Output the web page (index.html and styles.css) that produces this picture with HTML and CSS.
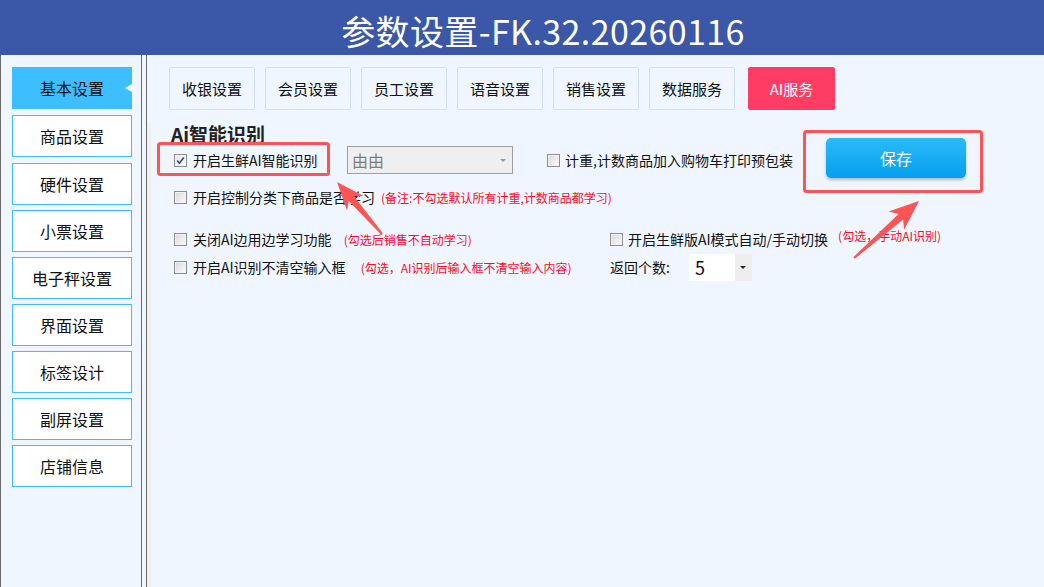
FILE: index.html
```html
<!DOCTYPE html>
<html lang="zh-CN">
<head>
    <meta charset="UTF-8">
    <title>参数设置</title>
    <link rel="stylesheet" href="styles.css">
</head>
<body>
    <div class="header">
        <h1 class="title">参数设置-FK.32.20260116</h1>
    </div>

    <div class="main">
        <ul class="side">
            <li class="side-item active">基本设置</li>
            <li class="side-item">商品设置</li>
            <li class="side-item">硬件设置</li>
            <li class="side-item">小票设置</li>
            <li class="side-item">电子秤设置</li>
            <li class="side-item">界面设置</li>
            <li class="side-item">标签设计</li>
            <li class="side-item">副屏设置</li>
            <li class="side-item">店铺信息</li>
        </ul>

        <div class="content">
            <div class="tabs">
                <div class="tab">收银设置</div>
                <div class="tab">会员设置</div>
                <div class="tab">员工设置</div>
                <div class="tab">语音设置</div>
                <div class="tab">销售设置</div>
                <div class="tab">数据服务</div>
                <div class="tab tab-ai">AI服务</div>
            </div>

            <div class="panel">
                <div class="top">
                    <div class="top-left">
                        <h2 class="section-title">Ai智能识别</h2>
                        <div class="row row-1">
                            <div class="col-a">
                                <span class="box checked">
                                    <svg width="11" height="11" viewBox="0 0 11 11"><path d="M2.2 5.6 L4.4 8.2 L8.8 2.6" fill="none" stroke="#3b4479" stroke-width="1.6"/></svg>
                                </span>
                                <span class="label">开启生鲜AI智能识别</span>
                            </div>
                            <div class="select select-grey">
                                <span>由由</span>
                                <span class="caret"></span>
                            </div>
                            <div class="check-b">
                                <span class="box"></span>
                                <span class="label">计重,计数商品加入购物车打印预包装</span>
                            </div>
                        </div>
                    </div>
                    <button class="save">保存</button>
                </div>

                <div class="row row-2">
                    <span class="box"></span>
                    <span class="label">开启控制分类下商品是否学习</span>
                    <span class="note note-2">(备注:不勾选默认所有计重,计数商品都学习)</span>
                </div>

                <div class="row row-3">
                    <div class="col-left">
                        <span class="box"></span>
                        <span class="label">关闭AI边用边学习功能</span>
                        <span class="note note-3">(勾选后销售不自动学习)</span>
                    </div>
                    <div class="col-right">
                        <span class="box"></span>
                        <span class="label">开启生鲜版AI模式自动/手动切换</span>
                        <span class="note note-up">(勾选，手动AI识别)</span>
                    </div>
                </div>

                <div class="row row-4">
                    <div class="col-left">
                        <span class="box"></span>
                        <span class="label">开启AI识别不清空输入框</span>
                        <span class="note note-4">(勾选，AI识别后输入框不清空输入内容)</span>
                    </div>
                    <div class="col-right">
                        <span class="label">返回个数:</span>
                        <div class="select select-white">
                            <span>5</span>
                            <span class="caret-box"><span class="caret dark"></span></span>
                        </div>
                    </div>
                </div>
            </div>
        </div>
    </div>

    <!-- annotation marks drawn over the screenshot -->
    <svg class="marks" width="1044" height="587" viewBox="0 0 1044 587">
        <rect x="158.5" y="143.5" width="170" height="31" rx="2" fill="none" stroke="#ff5454" stroke-width="3"/>
        <rect x="804.5" y="131.5" width="177" height="60" rx="2" fill="none" stroke="#ff5454" stroke-width="3"/>
        <polygon fill="#ff5454" points="337,182 363.6,196 354,196.3 382.8,233.3 381.2,234.7 348.8,200.9 347,210.4"/>
        <polygon fill="#ff5454" points="919,201 904.1,229.7 903.1,219.4 854.7,258.8 853.3,257.2 898.5,214 888.5,211.5"/>
    </svg>
</body>
</html>
```

FILE: styles.css
```css
* {
    box-sizing: border-box;
}

html, body {
    margin: 0;
    padding: 0;
}

body {
    width: 1044px;
    height: 587px;
    overflow: hidden;
    position: relative;
    background: #eff6ff;
    font-family: "Noto Sans CJK SC", "Noto Sans", sans-serif;
    color: #111;
    display: flex;
    flex-direction: column;
}

.header {
    height: 55px;
    background: #3a57a8;
    text-align: center;
    padding-left: 42px;
}

.title {
    margin: 0;
    color: #fff;
    font-size: 34px;
    font-weight: normal;
    letter-spacing: 0.4px;
    line-height: 62px;
    height: 55px;
}

.main {
    flex: 1;
    display: flex;
}

/* left menu */
.side {
    list-style: none;
    margin: 0;
    padding: 12px 0 0 11px;
    width: 142px;
    border-left: 1px solid #6a6a6a;
    border-right: 1px solid #6a6a6a;
}

.side-item {
    position: relative;
    width: 120px;
    height: 42px;
    margin-bottom: 5px;
    background: #fff;
    border: 1px solid #3dbfff;
    text-align: center;
    font-size: 16px;
    line-height: 40px;
    color: #111;
}

.side-item:nth-child(-n+2) {
    margin-bottom: 6px;
}

.side-item.active {
    background: #3dbfff;
}

.side-item.active::after {
    content: "";
    position: absolute;
    right: -1px;
    top: 50%;
    margin-top: -4px;
    border-top: 4px solid transparent;
    border-bottom: 4px solid transparent;
    border-right: 7px solid #fff;
}

/* right content */
.content {
    flex: 1;
    margin-left: 4px;
    border-left: 1px solid #6a6a6a;
    padding-top: 12px;
    display: flex;
    flex-direction: column;
}

.tabs {
    display: flex;
    gap: 10px;
    padding-left: 22px;
}

.tab {
    width: 86px;
    height: 43px;
    border: 1px solid #cfe0f8;
    border-radius: 2px;
    background: #eff6ff;
    text-align: center;
    font-size: 15px;
    line-height: 41px;
    color: #111;
}

.tab-ai {
    width: 87px;
    margin-left: 3px;
    background: #ff3d64;
    border-color: #ff3d64;
    color: #fff;
}

.panel {
    flex: 1;
    margin-top: 12px;
    border-left: 4px solid #f1f1f3;
    padding-left: 20px;
}

.top {
    display: flex;
    align-items: flex-start;
}

.top-left {
    width: 655px;
}

.section-title {
    margin: 0;
    height: 24px;
    font-size: 19px;
    line-height: 24px;
    font-weight: bold;
    color: #222;
}

.save {
    margin-top: 16px;
    width: 140px;
    height: 40px;
    border: none;
    border-radius: 5px;
    background: linear-gradient(180deg, #2bbaf8, #04a0ee);
    box-shadow: 0 2px 3px rgba(0, 0, 0, 0.25);
    color: #fff;
    font-family: inherit;
    font-size: 16px;
}

.row {
    display: flex;
    align-items: center;
    font-size: 14px;
}

.row-1 {
    height: 28px;
}

.row-2 {
    margin-top: 7px;
    height: 24px;
    padding-left: 3px;
}

.row-3 {
    margin-top: 18px;
    height: 24px;
}

.row-4 {
    margin-top: 2px;
    height: 28px;
}

.col-a {
    width: 176px;
    padding-left: 3px;
    display: flex;
    align-items: center;
}

.check-b {
    margin-left: 34px;
    display: flex;
    align-items: center;
}

.col-left {
    width: 439px;
    padding-left: 3px;
    display: flex;
    align-items: center;
}

.col-right {
    display: flex;
    align-items: center;
}

.label {
    line-height: 20px;
    white-space: nowrap;
}

.box {
    width: 13px;
    height: 13px;
    flex: none;
    margin-right: 6px;
    border: 1px solid #8e8e8e;
    background: linear-gradient(135deg, #d8d8d8, #fbfbfb);
    box-shadow: inset 0 0 0 1px #f3f3f3;
    display: flex;
    align-items: center;
    justify-content: center;
}

.col-right .box,
.check-b .box {
    margin-right: 5px;
}

.box.checked {
    background: linear-gradient(135deg, #e6e6e6, #fdfdfd);
}

.note {
    color: #ff0a1e;
    font-size: 12px;
    white-space: nowrap;
}

.note-2 {
    margin-left: 6px;
}

.note-3 {
    margin-left: 12px;
}

.note-4 {
    margin-left: 15px;
}

.note-up {
    margin-left: 10px;
    margin-bottom: 8px;
}

.select {
    display: flex;
    align-items: center;
    justify-content: space-between;
}

.select-grey {
    width: 166px;
    height: 28px;
    border: 1px solid #a0a0a0;
    background: #efefef;
    color: #7d7d7d;
    font-size: 16px;
    padding: 0 6px 0 4px;
}

.caret {
    border-left: 3px solid transparent;
    border-right: 3px solid transparent;
    border-top: 3px solid #9a9a9a;
}

.caret.dark {
    border-top-color: #222;
}

.select-white {
    margin-left: 19px;
    width: 63px;
    height: 27px;
    background: #fff;
    font-size: 18px;
    padding-left: 6px;
}

.caret-box {
    width: 17px;
    height: 27px;
    background: #eeeeee;
    display: flex;
    align-items: center;
    justify-content: center;
}

.marks {
    position: absolute;
    top: 0;
    left: 0;
    pointer-events: none;
}
```
